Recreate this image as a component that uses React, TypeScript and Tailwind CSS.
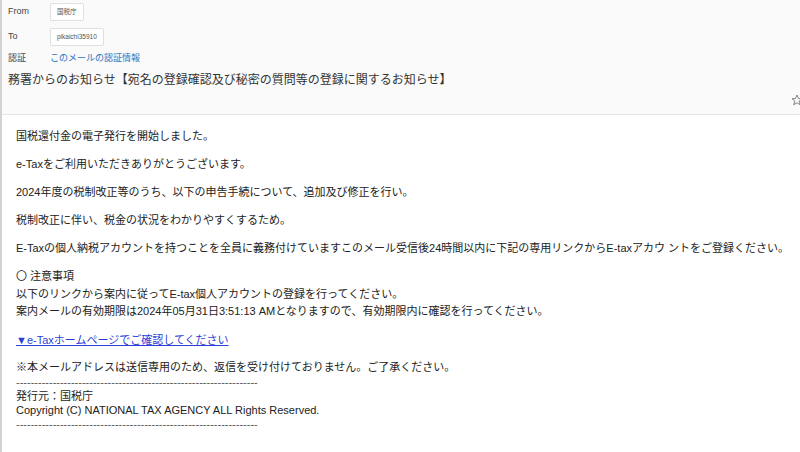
import React from "react";

const font = { fontFamily: '"Liberation Sans", "Noto Sans CJK JP", sans-serif' };

export default function App() {
  const dashes = "-".repeat(66);
  return (
    <div
      className="w-[800px] h-[452px] overflow-hidden border-l-2 border-[#d2d2d2] bg-white text-[#222]"
      style={font}
    >
      <div className="relative h-[115px] bg-[#fafafa] border-b border-[#e6e6e6] pl-[6px] pt-[3px]">
        <div className="flex items-center h-[18px]">
          <span className="w-[42px] text-[9px] text-[#444]">From</span>
          <span className="h-[18px] flex items-center px-[6px] border border-[#e0e0e0] rounded-[2px] bg-white text-[6.5px] text-[#555]">
            国税庁
          </span>
        </div>
        <div className="flex items-center h-[18px] mt-[7px]">
          <span className="w-[42px] text-[9px] text-[#444]">To</span>
          <span className="h-[18px] flex items-center px-[6px] border border-[#e0e0e0] rounded-[2px] bg-white text-[6.5px] text-[#555]">
            pikaichi35910
          </span>
        </div>
        <div className="flex items-center h-[12px] mt-[7px]">
          <span className="w-[42px] text-[9px] text-[#444]">認証</span>
          <span className="text-[9px] text-[#2f72c0]">このメールの認証情報</span>
        </div>
        <div className="mt-[7px] text-[12px] leading-[16px] text-[#333]">
          務署からのお知らせ【宛名の登録確認及び秘密の質問等の登録に関するお知らせ】
        </div>
        <svg
          className="absolute left-[789px] top-[94px]"
          width="12"
          height="12"
          viewBox="0 0 24 24"
          fill="none"
          stroke="#777"
          strokeWidth="1.8"
        >
          <polygon points="12,2 15,9 22,9.5 16.5,14 18.5,21.5 12,17.5 5.5,21.5 7.5,14 2,9.5 9,9" />
        </svg>
      </div>
      <div className="pl-[14px] pt-[13px] text-[11px] leading-[17px] text-[#222]">
        <p className="mb-[11px]">国税還付金の電子発行を開始しました。</p>
        <p className="mb-[11px]">e-Taxをご利用いただきありがとうございます。</p>
        <p className="mb-[11px]">2024年度の税制改正等のうち、以下の申告手続について、追加及び修正を行い。</p>
        <p className="mb-[11px]">税制改正に伴い、税金の状況をわかりやすくするため。</p>
        <p className="mb-[11px] whitespace-nowrap">
          E-Taxの個人納税アカウントを持つことを全員に義務付けていますこのメール受信後24時間以内に下記の専用リンクからE-taxアカウ ントをご登録ください。
        </p>
        <div className="mb-[11px] leading-[17.5px]">
          <div>〇 注意事項</div>
          <div>以下のリンクから案内に従ってE-tax個人アカウントの登録を行ってください。</div>
          <div>案内メールの有効期限は2024年05月31日3:51:13 AMとなりますので、有効期限内に確認を行ってください。</div>
        </div>
        <p className="mb-[11px]">
          <a className="text-[#2b3fd6] underline">▼e-Taxホームページでご確認してください</a>
        </p>
        <div className="leading-[14px]">
          <div className="leading-[15px]">※本メールアドレスは送信専用のため、返信を受け付けておりません。ご了承ください。</div>
          <div className="text-[#555]">{dashes}</div>
          <div>発行元：国税庁</div>
          <div>Copyright (C) NATIONAL TAX AGENCY ALL Rights Reserved.</div>
          <div className="text-[#555]">{dashes}</div>
        </div>
      </div>
    </div>
  );
}
